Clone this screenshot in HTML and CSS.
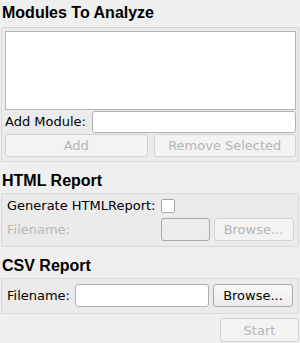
FILE: index.html
```html
<!DOCTYPE html>
<html>
<head>
<meta charset="utf-8">
<link rel="stylesheet" href="styles.css">
</head>
<body>
<div class="page">
  <section class="section first">
    <h2 class="title">Modules To Analyze</h2>
    <div class="group modules">
      <div class="listbox"></div>
      <div class="row">
        <span class="label">Add Module:</span>
        <div class="input grow"></div>
      </div>
      <div class="btns">
        <button class="btn disabled">Add</button>
        <button class="btn disabled">Remove Selected</button>
      </div>
    </div>
  </section>
  <section class="section">
    <h2 class="title">HTML Report</h2>
    <div class="group form html">
      <span class="label">Generate HTMLReport:</span>
      <div class="field"><span class="check"></span></div>
      <span class="label dim">Filename:</span>
      <div class="field">
        <div class="input small off"></div>
        <button class="btn disabled browse">Browse...</button>
      </div>
    </div>
  </section>
  <section class="section">
    <h2 class="title">CSV Report</h2>
    <div class="group csv">
      <span class="label">Filename:</span>
      <div class="input wide"></div>
      <button class="btn browse">Browse...</button>
    </div>
  </section>
  <div class="footer">
    <button class="btn disabled start">Start</button>
  </div>
</div>
</body>
</html>
```
FILE: styles.css
```css
html, body {
  margin: 0;
  padding: 0;
  background: #efefef;
}
body {
  font-family: "DejaVu Sans", sans-serif;
  font-size: 13px;
  color: #000;
  width: 300px;
  height: 343px;
  overflow: hidden;
}
.page {
  padding: 4px 1px 0 1px;
}
.section + .section {
  margin-top: 10px;
}
.title {
  font-family: "Liberation Sans", Arial, sans-serif;
  font-weight: bold;
  font-size: 16px;
  line-height: 18px;
  margin: 0 0 3px 1px;
  color: #000;
}
.first .title {
  margin-bottom: 5px;
}
.group {
  border: 1px solid #d8d8d8;
  border-radius: 2px;
  background: #ebebeb;
}
.modules {
  padding: 3px 2px 4px 3px;
  display: flex;
  flex-direction: column;
  gap: 1px;
}
.listbox {
  height: 77px;
  background: #fff;
  border: 1px solid #b5b5b5;
}
.row {
  display: flex;
  align-items: center;
  gap: 6px;
}
.label {
  white-space: nowrap;
  line-height: 16px;
}
.dim {
  color: #b8b8b8;
}
.input {
  height: 20px;
  background: #fff;
  border: 1px solid #b0b0b0;
  border-radius: 3px;
  box-sizing: content-box;
}
.grow {
  flex: 1;
}
.btns {
  display: grid;
  grid-template-columns: 1fr 1fr;
  gap: 6px;
}
.btn {
  font-family: "DejaVu Sans", sans-serif;
  font-size: 13px;
  height: 23px;
  padding: 0;
  border: 1px solid #a9a9a9;
  border-radius: 3px;
  background: linear-gradient(#f8f8f8, #ececec);
  color: #000;
}
.btn.disabled {
  border-color: #d2d2d2;
  background: #f3f3f3;
  color: #b5b5b5;
}
.form {
  display: grid;
  grid-template-columns: auto 1fr;
  grid-template-rows: 14px 23px;
  column-gap: 5px;
  row-gap: 5px;
  align-items: center;
  padding: 5px 5px 5px 5px;
}
.field {
  display: flex;
  align-items: center;
  gap: 4px;
}
.check {
  width: 12px;
  height: 12px;
  background: #fff;
  border: 1px solid #a5a5a5;
  border-radius: 2px;
}
.input.small {
  width: 47px;
  height: 21px;
}
.input.off {
  background: #ececec;
  border-color: #a8a8a8;
}
.browse {
  width: 80px;
  height: 23px;
}
.csv {
  display: flex;
  align-items: center;
  padding: 5px 5px 6px 5px;
}
.csv .label {
  margin-right: 5px;
}
.input.wide {
  width: 132px;
  height: 21px;
  margin-right: 4px;
}
.footer {
  display: flex;
  justify-content: flex-end;
  padding-top: 4px;
}
.start {
  width: 79px;
  height: 24px;
}
```
